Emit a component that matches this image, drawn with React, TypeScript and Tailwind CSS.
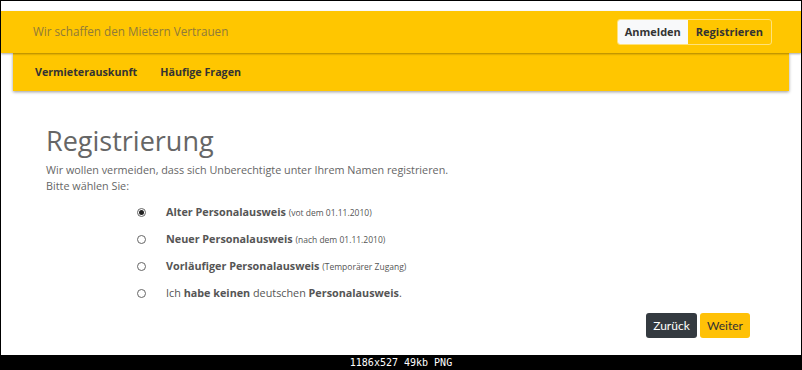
import React from "react";

const radios = [
  { checked: true, content: (<><b className="font-bold">Alter Personalausweis</b> <span className="text-[8.5px]">(vot dem 01.11.2010)</span></>) },
  { checked: false, content: (<><b className="font-bold">Neuer Personalausweis</b> <span className="text-[8.5px]">(nach dem 01.11.2010)</span></>) },
  { checked: false, content: (<><b className="font-bold">Vorläufiger Personalausweis</b> <span className="text-[8.5px]">(Temporärer Zugang)</span></>) },
  { checked: false, content: (<>Ich <b className="font-bold">habe keinen</b> deutschen <b className="font-bold">Personalausweis</b>.</>) },
];

export default function App() {
  return (
    <div className="w-[802px] h-[370px] bg-black flex flex-col pt-px px-px" style={{ fontFamily: "'Open Sans', sans-serif" }}>
      <div className="h-[354px] bg-white flex flex-col">
        <div className="h-[10px]" />
        <div className="relative z-10 h-[42px] bg-[#ffc600] flex items-center justify-between pl-[32px] pr-[29px] shadow-[0_1px_2px_rgba(0,0,0,0.35)]">
          <span className="text-[11.7px] text-[#8f7a3a]">Wir schaffen den Mietern Vertrauen</span>
          <div className="flex h-[26px] rounded-[3px] border border-[#ffe27a] overflow-hidden text-[11px] font-bold text-[#333]">
            <div className="bg-[#f8f9fa] px-[7px] flex items-center">Anmelden</div>
            <div className="px-[8px] flex items-center">Registrieren</div>
          </div>
        </div>
        <div className="mx-[12px] h-[38px] bg-[#ffc600] flex items-center gap-[23px] pl-[22px] text-[10.7px] font-bold text-[#333] shadow-[0_1px_3px_rgba(0,0,0,0.4)]">
          <span>Vermieterauskunft</span>
          <span>Häufige Fragen</span>
        </div>
        <div className="pl-[45px] pr-[51px] pt-[33px] text-[#666]">
          <h1 className="text-[27px] leading-[34px] text-[#666]">Registrierung</h1>
          <p className="text-[10.8px] leading-[16px] mt-[4px]">
            Wir wollen vermeiden, dass sich Unberechtigte unter Ihrem Namen registrieren.
            <br />
            Bitte wählen Sie:
          </p>
          <div className="flex flex-col pl-[91px] mt-[10px] gap-[11px] text-[10.8px] leading-[16px] text-[#555]">
            {radios.map((r, i) => (
              <div key={i} className="flex items-center gap-[20px] h-[16px]">
                <span className="w-[9px] h-[9px] shrink-0 rounded-full border border-[#666] flex items-center justify-center bg-white">
                  {r.checked && <span className="w-[5px] h-[5px] rounded-full bg-[#222]" />}
                </span>
                <span className="leading-[16px]">{r.content}</span>
              </div>
            ))}
          </div>
          <div className="flex justify-end gap-[3px] mt-[12px]" style={{ fontFamily: "Lato, sans-serif" }}>
            <div className="h-[25px] w-[51px] rounded-[3px] bg-[#343a40] text-white text-[12px] flex items-center justify-center">Zurück</div>
            <div className="h-[25px] w-[50px] rounded-[3px] bg-[#ffc107] text-[#333] text-[12px] flex items-center justify-center">Weiter</div>
          </div>
        </div>
      </div>
      <div className="h-[15px] flex items-center justify-center text-white text-[10px] leading-none" style={{ fontFamily: "'DejaVu Sans Mono', monospace" }}>
        1186x527 49kb PNG
      </div>
    </div>
  );
}
